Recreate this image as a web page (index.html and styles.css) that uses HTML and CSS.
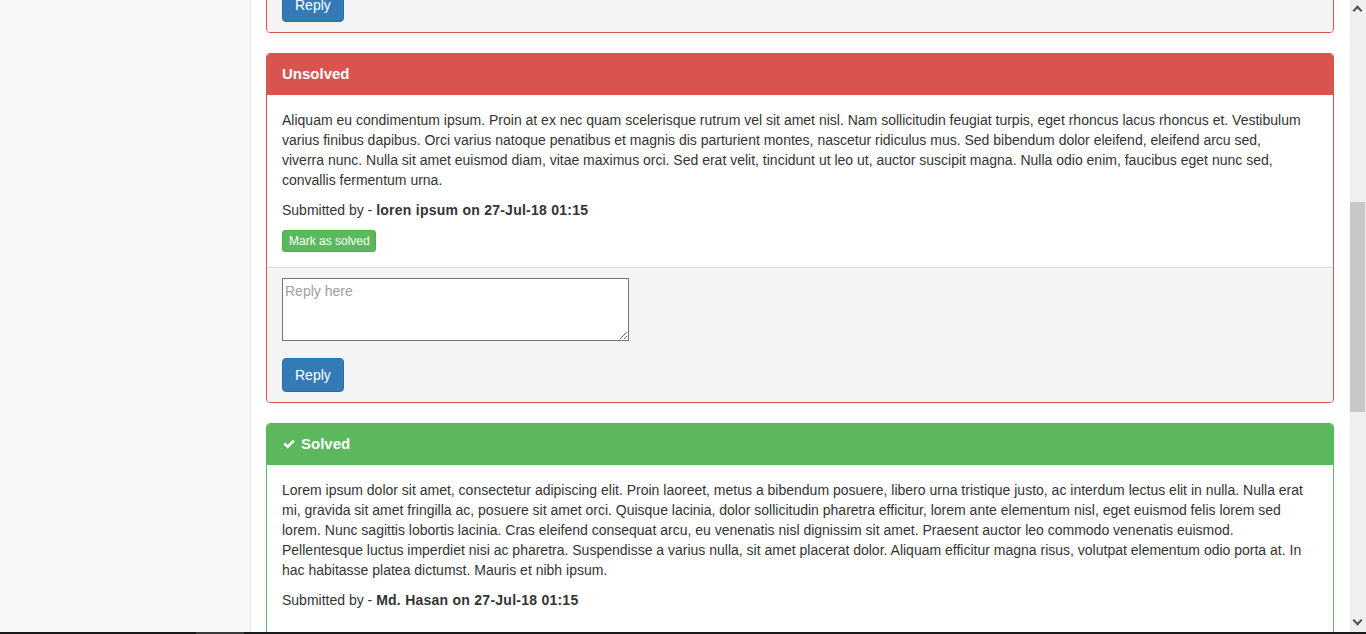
FILE: index.html
```html
<!DOCTYPE html>
<html lang="en">
<head>
<meta charset="utf-8">
<title>Questions</title>
<link rel="stylesheet" href="styles.css">
</head>
<body>
<div class="page">
  <aside class="sidebar"></aside>
  <main class="main">
    <section class="panel panel-danger panel-scrolled">
      <div class="panel-footer no-top">
        <textarea class="reply-box" placeholder="Reply here"></textarea>
        <button class="btn btn-primary">Reply</button>
      </div>
    </section>

    <section class="panel panel-danger">
      <div class="panel-heading">Unsolved</div>
      <div class="panel-body">
        <p>Aliquam eu condimentum ipsum. Proin at ex nec quam scelerisque rutrum vel sit amet nisl. Nam sollicitudin feugiat turpis, eget rhoncus lacus rhoncus et. Vestibulum varius finibus dapibus. Orci varius natoque penatibus et magnis dis parturient montes, nascetur ridiculus mus. Sed bibendum dolor eleifend, eleifend arcu sed,<br>viverra nunc. Nulla sit amet euismod diam, vitae maximus orci. Sed erat velit, tincidunt ut leo ut, auctor suscipit magna. Nulla odio enim, faucibus eget nunc sed, convallis fermentum urna.</p>
        <p>Submitted by - <b>loren ipsum on 27-Jul-18 01:15</b></p>
        <button class="btn btn-success btn-xs">Mark as solved</button>
      </div>
      <div class="panel-footer">
        <textarea class="reply-box" placeholder="Reply here"></textarea>
        <button class="btn btn-primary">Reply</button>
      </div>
    </section>

    <section class="panel panel-success">
      <div class="panel-heading"><svg class="check" width="12" height="10" viewBox="0 0 12 10"><path d="M0.3 5.3 L2.1 3.5 L4.6 6 L9.9 0.7 L11.7 2.5 L4.6 9.6 Z" fill="#fff"/></svg>Solved</div>
      <div class="panel-body">
        <p>Lorem ipsum dolor sit amet, consectetur adipiscing elit. Proin laoreet, metus a bibendum posuere, libero urna tristique justo, ac interdum lectus elit in nulla. Nulla erat mi, gravida sit amet fringilla ac, posuere sit amet orci. Quisque lacinia, dolor sollicitudin pharetra efficitur, lorem ante elementum nisl, eget euismod felis lorem sed lorem. Nunc sagittis lobortis lacinia. Cras eleifend consequat arcu, eu venenatis nisl dignissim sit amet. Praesent auctor leo commodo venenatis euismod. Pellentesque luctus imperdiet nisi ac pharetra. Suspendisse a varius nulla, sit amet placerat dolor. Aliquam efficitur magna risus, volutpat elementum odio porta at. In hac habitasse platea dictumst. Mauris et nibh ipsum.</p>
        <p>Submitted by - <b>Md. Hasan on 27-Jul-18 01:15</b></p>
      </div>
    </section>
  </main>
  <div class="scrollbar">
    <div class="arrow arrow-up"></div>
    <div class="thumb"></div>
    <div class="arrow arrow-down"></div>
  </div>
</div>
<div class="bottom-bar"><span class="bottom-seg"></span></div>
</body>
</html>
```

FILE: styles.css
```css
* { box-sizing: border-box; }
html, body {
  margin: 0;
  height: 634px;
  overflow: hidden;
  background: #fff;
  font-family: "Liberation Sans", Arial, sans-serif;
  font-size: 14px;
  line-height: 20px;
  color: #333;
}
.page {
  display: flex;
  height: 634px;
  overflow: hidden;
}
.sidebar {
  width: 251px;
  flex: none;
  background: #f8f8f8;
  border-right: 1px solid #e7e7e7;
}
.main {
  flex: 1;
  padding: 0 15px;
  min-width: 0;
}
.panel {
  border: 1px solid;
  border-radius: 4px;
  margin-bottom: 20px;
  background: #fff;
  overflow: hidden;
}
.panel-scrolled { margin-top: -103px; }
.panel-danger { border-color: #d9534f; }
.panel-success { border-color: #5cb85c; }
.panel-heading {
  display: flex;
  align-items: center;
  padding: 9px 15px 11px;
  height: 41px;
  color: #fff;
  font-weight: bold;
  font-size: 15px;
}
.panel-danger .panel-heading { background: #d9534f; }
.panel-success .panel-heading { background: #5cb85c; }
.check { margin: 1px 6px 0 1px; }
.panel-body { padding: 15px; }
.panel-body p { margin: 0 0 10px; }
.panel-body b { letter-spacing: 0.25px; }
.panel-footer {
  background: #f4f4f4;
  border-top: 1px solid #ddd;
  padding: 10px 15px;
}
.panel-footer.no-top { border-top: 0; }
.reply-box {
  display: block;
  width: 347px;
  height: 63px;
  margin: 0 0 17px;
  padding: 2px;
  border: 1px solid #767676;
  font-family: "Liberation Sans", Arial, sans-serif;
  font-size: 14px;
  line-height: 20px;
  color: #333;
  background: #fff;
}
.reply-box::placeholder { color: #a0a0a0; }
.btn {
  display: inline-block;
  font-family: "Liberation Sans", Arial, sans-serif;
  border: 1px solid;
  cursor: pointer;
}
.btn-primary {
  background: #337ab7;
  border-color: #2e6da4;
  color: #fff;
  font-size: 14px;
  line-height: 20px;
  padding: 6px 12px;
  border-radius: 4px;
  height: 34px;
}
.btn-success { background: #5cb85c; border-color: #4cae4c; color: #fff; }
.btn-xs {
  font-size: 12px;
  line-height: 18px;
  padding: 1px 5px 1px 6px;
  border-radius: 3px;
  height: 22px;
}
.scrollbar {
  width: 17px;
  flex: none;
  background: #f0f0f0;
  border-left: 1px solid #fafafa;
  position: relative;
}
.thumb {
  position: absolute;
  left: 0;
  top: 202px;
  width: 15px;
  height: 210px;
  background: #c8c8c8;
}
.arrow {
  position: absolute;
  left: 4px;
  width: 7px;
  height: 7px;
  border-left: 2px solid #505050;
  border-top: 2px solid #505050;
}
.arrow-up { top: 7px; transform: rotate(45deg); }
.arrow-down { bottom: 10px; transform: rotate(225deg); }
.bottom-bar {
  position: fixed;
  left: 0;
  right: 0;
  bottom: 0;
  height: 2px;
  background: #1a1a1a;
}
.bottom-seg {
  display: block;
  margin-left: 196px;
  width: 48px;
  height: 2px;
  background: #3a3a3a;
}
```
